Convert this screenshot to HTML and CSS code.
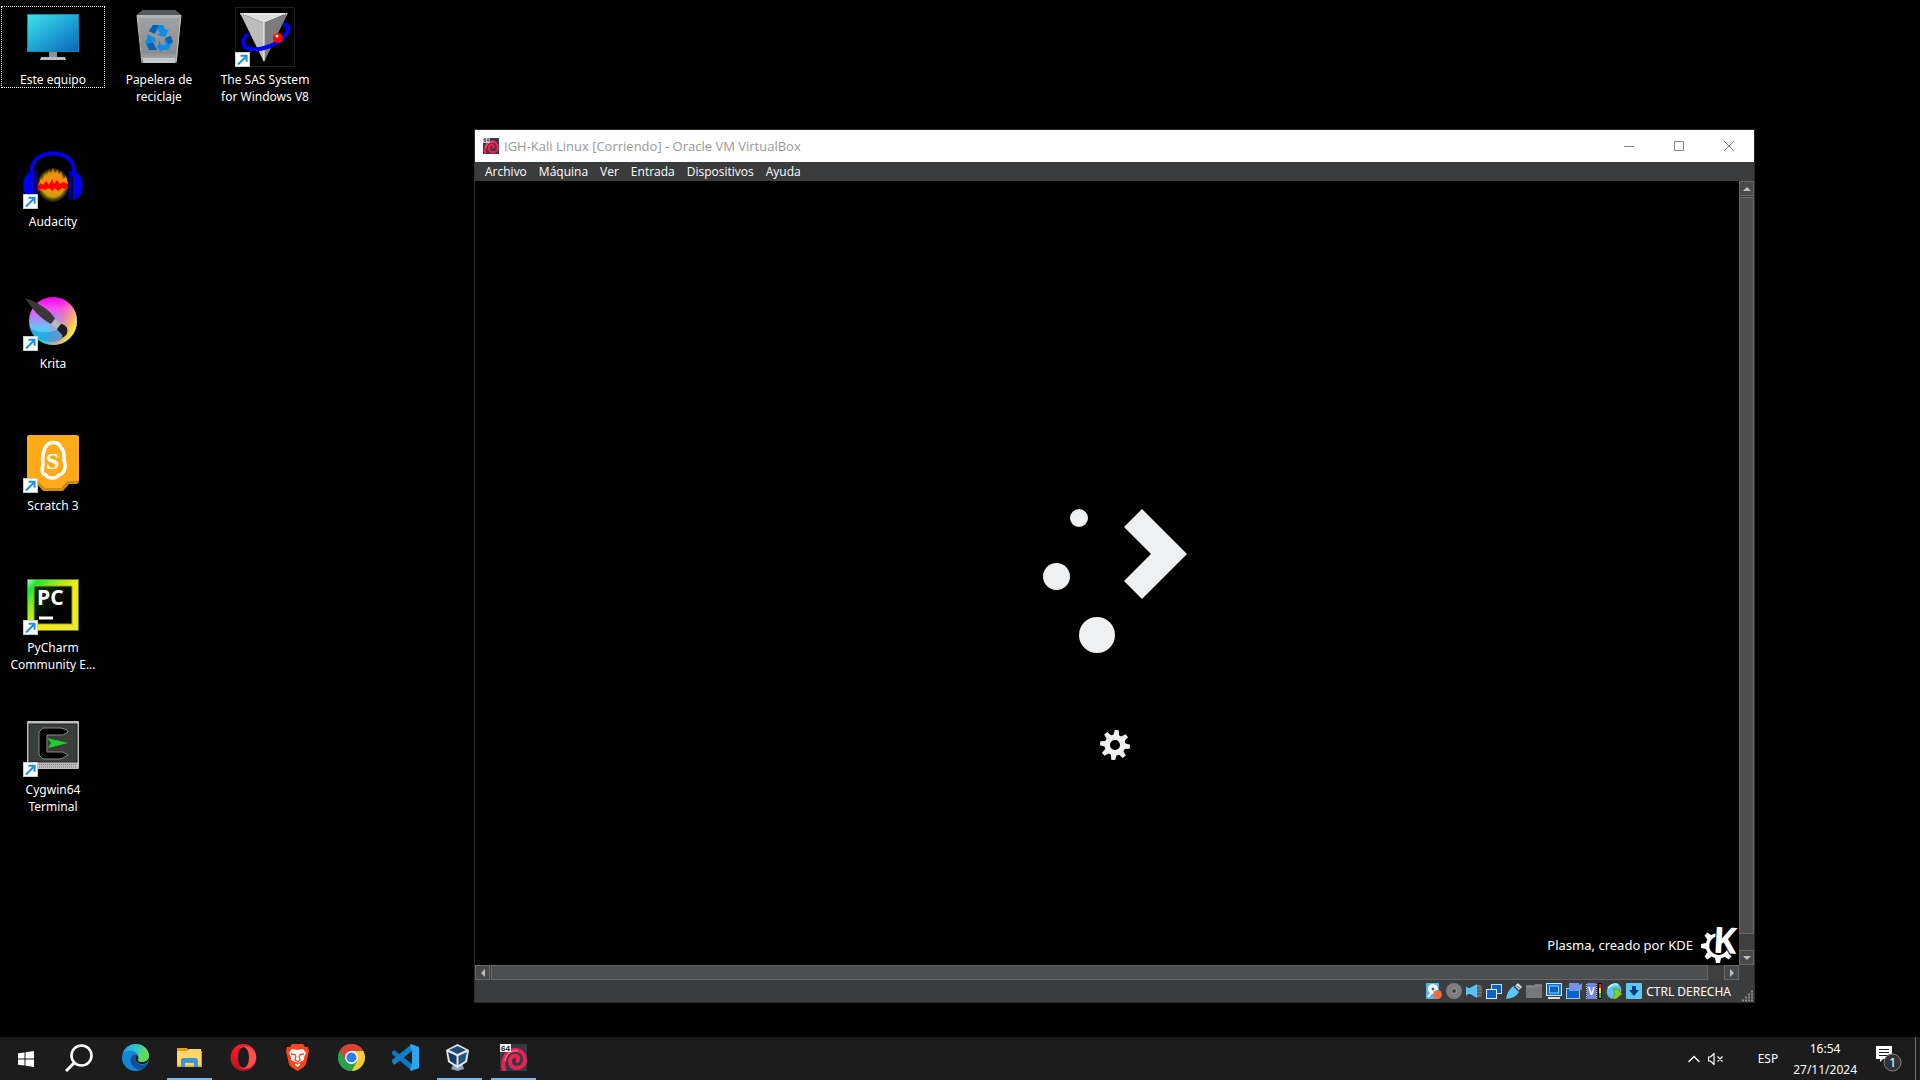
FILE: index.html
```html
<!DOCTYPE html>
<html lang="es">
<head>
<meta charset="utf-8">
<title>Escritorio</title>
<link rel="stylesheet" href="styles.css">
</head>
<body>
<svg width="0" height="0" class="defs" aria-hidden="true">
  <defs>
    <linearGradient id="screen" x1="0" y1="0" x2="1" y2="1"><stop offset="0" stop-color="#3fe3ea"/><stop offset=".5" stop-color="#1fa5d6"/><stop offset="1" stop-color="#0768bb"/></linearGradient>
    <linearGradient id="bin" x1="0" y1="0" x2="0" y2="1"><stop offset="0" stop-color="#a4a6a8"/><stop offset=".8" stop-color="#8a8d90"/><stop offset="1" stop-color="#b4bac0"/></linearGradient>
    <radialGradient id="wave"><stop offset="0" stop-color="#ffa800"/><stop offset=".7" stop-color="#c8a010"/><stop offset="1" stop-color="#3a3000" stop-opacity=".4"/></radialGradient>
    <linearGradient id="krita1" x1="0" y1="0" x2="0" y2="1"><stop offset="0" stop-color="#ff00f0"/><stop offset=".25" stop-color="#f050f0"/><stop offset=".6" stop-color="#78b8f8"/><stop offset=".8" stop-color="#20e8f0"/><stop offset="1" stop-color="#00f0d0"/></linearGradient>
    <linearGradient id="krita2" x1=".5" y1=".4" x2="1" y2=".65"><stop offset="0" stop-color="#ff60b0" stop-opacity="0"/><stop offset=".6" stop-color="#ffa080" stop-opacity=".9"/><stop offset="1" stop-color="#f8ff20"/></linearGradient>
    <linearGradient id="pyframe" x1="0" y1="0" x2="1" y2="1"><stop offset="0" stop-color="#b8ffc0"/><stop offset=".12" stop-color="#18e838"/><stop offset=".3" stop-color="#90ec20"/><stop offset=".5" stop-color="#f2ea10"/><stop offset="1" stop-color="#ece63c"/></linearGradient>
    <linearGradient id="pyin" x1="0" y1="0" x2="1" y2="1"><stop offset="0" stop-color="#103c14"/><stop offset=".6" stop-color="#000"/></linearGradient>
    <linearGradient id="edge" x1="0" y1=".2" x2="1" y2=".5"><stop offset="0" stop-color="#22a6ec"/><stop offset=".5" stop-color="#30c8c8"/><stop offset="1" stop-color="#70e048"/></linearGradient>
    <linearGradient id="opera" x1="0" y1="0" x2="0" y2="1"><stop offset="0" stop-color="#ff1b2d"/><stop offset="1" stop-color="#b8101c"/></linearGradient>
    <symbol id="shortcut" viewBox="0 0 15 15"><rect x=".5" y=".5" width="14" height="14" fill="#fff" stroke="#c4ccd4"/><path d="M3 12.500 11 4.500M5.500 3.700H11.600V9.800" fill="none" stroke="#1e90e0" stroke-width="2"/></symbol>
    <symbol id="debian" viewBox="0 0 27 27"><rect width="27" height="27" fill="#343a44"/><path d="M4.500 27C1 17 6 6 15 6 22 6 25 11 25 16 25 21 21 24 17 24 13 24 10 21 10 17 10 13 13 11 16 12 19 13 19 17 16 17" fill="none" stroke="#f02050" stroke-width="4"/><path d="M5 17C6 10 12 5.500 18 7" fill="none" stroke="#ff7a94" stroke-width="1.200"/><rect width="11" height="8" fill="#eee"/><text x="1" y="7" class="bits">64</text></symbol>
  </defs>
</svg>

<main class="desktop">
  <div class="icons">
    <a href="#" class="icon focused"><svg viewBox="0 0 60 60"><rect x="4" y="7" width="52" height="38" fill="#1585b0"/><rect x="5" y="8" width="50" height="36" fill="url(#screen)"/><rect x="26" y="45" width="8" height="6" fill="#8a929c"/><path d="M18 50h24l1 3H17z" fill="#b4bcc4"/></svg><span>Este equipo</span></a>
    <a href="#" class="icon"><svg viewBox="0 0 60 60"><path d="M8 8 14 3H46L52 8 48 52 46 56H14L13 52z" fill="url(#bin)"/><path d="M8 8 14 3H46L52 8z" fill="#55585c"/><path d="M8 8H52L51 11H9z" fill="#b0b3b5"/><path d="M8 8 13 56M52 8 47 56" stroke="#c2c5c8"/><path d="M14 51H46V56H14z" fill="#c3c9cf"/><g fill="#0f8de4"><path d="M24 18H34L37 23 40 22 36 30 28 28 31 26 28 22 25 27 20 24z"/><path d="M18 27 26 31 27 36 24 34 22 39 25 43H20L16 35 18 32z"/><path d="M30 36V32L32 38H37L35 33 41 29 44 35 39 43H33V46L28 40z"/></g><path d="M24 18H30L26 27 20 24zM18 37 24 35 28 43H20zM36 31 42 29 44 35 39 37z" fill="#0462b4"/></svg><span>Papelera de reciclaje</span></a>
    <a href="#" class="icon"><svg viewBox="0 0 60 60"><rect x=".5" y=".5" width="59" height="59" fill="#000" stroke="#202020"/><path d="M5 6H53L29 16z" fill="#dcdcdc"/><path d="M5 6 29 16V55z" fill="#bcbcbc"/><path d="M53 6 29 16V55z" fill="#7c7c7c"/><path d="M29 15V54" stroke="#fff"/><path d="M5 7H53" stroke="#fff" stroke-dasharray="1 1"/><path d="M13 27C7 32 6 40 15 42 25 44 42 38 49 30 54 24 56 17 48 18" fill="none" stroke="#00f" stroke-width="4"/><circle cx="43" cy="31" r="5" fill="#f00"/><circle cx="42" cy="29" r="1.500" fill="#fff"/><use href="#shortcut" y="45" width="15" height="15"/></svg><span>The SAS System for Windows V8</span></a>
    <a href="#" class="icon col1"><svg viewBox="0 0 60 60"><path d="M9 27V21C9 11 18 4.500 30 4.500S51 11 51 21V27" fill="none" stroke="#00e" stroke-width="4"/><path d="M10 22V51C-3 49-3 24 10 22zM50 22V51C63 49 63 24 50 22z" fill="#00e"/><path d="M13 22V51M47 22V51" stroke="#0000a0" stroke-width="3"/><ellipse cx="30" cy="36" rx="16" ry="17" fill="url(#wave)"/><path d="M16 35 18 29 20 33 22 24 24 31 26 21 28 30 30 18 32 30 34 20 36 28 38 22 40 31 43 27 45 35V38L42 41 39 39 36 45 33 40 30 47 27 40 24 44 21 39 18 42 15 38z" fill="#ff8a10"/><path d="M15 37 18 34 20 36 23 32 26 36 29 30 31 35 34 31 37 35 40 33 45 35V38L42 40 39 39 35 42 32 39 29 42 26 39 22 41 19 40 15 42z" fill="#f00"/><use href="#shortcut" y="45" width="15" height="15"/></svg><span>Audacity</span></a>
    <a href="#" class="icon col1"><svg viewBox="0 0 60 60"><circle cx="30" cy="30" r="24" fill="url(#krita1)"/><circle cx="30" cy="30" r="24" fill="url(#krita2)"/><path d="M8 38C18 43 31 42 37 37L42 38C43 46 38 50 31 51 20 51 10 48 8 38z" fill="#2b8fe0" opacity=".65"/><path d="M2 7C12 10 28 19 32 28L28 33C18 28 8 17 2 7z" fill="#38383a"/><path d="M32 28 38 33 34 38 28 33z" fill="#b8b8b8"/><path d="M38 33C46 34 47 44 39 47 41 43 36 42 34 38z" fill="#1c2025"/><use href="#shortcut" y="45" width="15" height="15"/></svg><span>Krita</span></a>
    <a href="#" class="icon col1"><svg viewBox="0 0 60 60"><path d="M4 5Q4 2 7 2H53Q56 2 56 5V48Q56 51 53 51H46L40 58H20L14 51H4z" fill="#cf8b17"/><path d="M4 5Q4 2 7 2H53Q56 2 56 5V46Q56 48 53 48H44L38 55H22L15 48H4z" fill="#ffab19"/><path d="M26 10.500C31 8 37 10 38 15 42 18 41 23 41 27 44 34 41 41 36 42 32 47 24 45 23 42 18 41 19 35 20 31 19 25 20 14 26 10.500z" fill="#ffab19" stroke="#fff" stroke-width="3.500"/><text x="23" y="36" class="scratch-s">S</text><use href="#shortcut" y="45" width="15" height="15"/></svg><span>Scratch 3</span></a>
    <a href="#" class="icon col1"><svg viewBox="0 0 60 60"><rect x="4.500" y="4.500" width="51" height="51" fill="url(#pyframe)" stroke="#6a7a10"/><rect x="11" y="11" width="38" height="38" fill="url(#pyin)" stroke="#a0a810"/><text x="14" y="30" class="py">PC</text><path d="M16 43H30" stroke="#fff" stroke-width="3"/><use href="#shortcut" y="45" width="15" height="15"/></svg><span>PyCharm Community&nbsp;E...</span></a>
    <a href="#" class="icon col1"><svg viewBox="0 0 60 60"><rect x="4" y="4" width="52" height="48" rx="1" fill="#bebebe"/><rect x="6" y="7" width="48" height="38" fill="#3a3e3a" stroke="#222"/><path d="M44 13 38 11H20L16 15V38L20 42H38L45 38 40 35H24V18H40L45 15z" fill="#000" stroke="#888"/><path d="M24 21 45 26 25 31 28 26z" fill="#18d428"/><path d="M14 47.500H53M14 50H53" stroke="#777" stroke-dasharray="1 1"/><use href="#shortcut" y="45" width="15" height="15"/></svg><span>Cygwin64 Terminal</span></a>
  </div>

  <section class="window">
    <header class="titlebar">
      <svg class="app" viewBox="0 0 27 27"><use href="#debian"/></svg>
      <h1>IGH-Kali Linux [Corriendo] - Oracle VM VirtualBox</h1>
      <button aria-label="Minimizar"><svg viewBox="0 0 10 10"><path d="M0 5.500H10"/></svg></button>
      <button aria-label="Maximizar"><svg viewBox="0 0 10 10"><path d="M.5.500H9.500V9.500H.5z"/></svg></button>
      <button aria-label="Cerrar"><svg viewBox="0 0 10 10"><path d="M0 0 10 10M10 0 0 10"/></svg></button>
    </header>
    <nav class="menu">
      <button>Archivo</button><button>Máquina</button><button>Ver</button><button>Entrada</button><button>Dispositivos</button><button>Ayuda</button>
    </nav>
    <div class="view">
      <div class="guest">
        <svg class="plasma" viewBox="0 0 144 144" fill="#eff0f1"><circle cx="36" cy="9" r="9"/><circle cx="13.500" cy="67.500" r="13.500"/><circle cx="54" cy="126" r="18"/><path d="M99 0 144 45 99 90 81 72 108 45 81 18z"/></svg>
        <svg class="spinner" viewBox="-15 -15 30 30"><g fill="#eff0f1" transform="rotate(7)"><path id="tooth" d="M-3-9-2-15H2L3-9z"/><use href="#tooth" transform="rotate(45)"/><use href="#tooth" transform="rotate(90)"/><use href="#tooth" transform="rotate(135)"/><use href="#tooth" transform="rotate(180)"/><use href="#tooth" transform="rotate(225)"/><use href="#tooth" transform="rotate(270)"/><use href="#tooth" transform="rotate(315)"/></g><circle r="7.800" fill="none" stroke="#eff0f1" stroke-width="5.500"/></svg>
        <div class="credit"><span>Plasma, creado por KDE</span>
          <svg viewBox="0 0 36 36"><g transform="translate(17 19)"><g fill="#fff"><path id="kt" d="M-3 12-2 17H2L3 12z"/><use href="#kt" transform="rotate(45)"/><use href="#kt" transform="rotate(90)"/><use href="#kt" transform="rotate(135)"/><use href="#kt" transform="rotate(-45)"/></g><path d="M-2-11A11 11 0 1 0 11 3" fill="none" stroke="#fff" stroke-width="3.500"/></g><text x="12" y="26" class="kde" transform="rotate(3 20 13)">K</text></svg>
        </div>
      </div>
      <div class="bar vertical"><button aria-label="Subir"><svg viewBox="0 0 8 8"><path d="M0 6 4 2 8 6z"/></svg></button><div class="thumb"></div><button aria-label="Bajar"><svg viewBox="0 0 8 8"><path d="M0 2 4 6 8 2z"/></svg></button></div>
      <div class="bar horizontal"><button aria-label="Izquierda"><svg viewBox="0 0 8 8"><path d="M6 0 2 4 6 8z"/></svg></button><div class="thumb"></div><button aria-label="Derecha"><svg viewBox="0 0 8 8"><path d="M2 0 6 4 2 8z"/></svg></button></div>
    </div>
    <footer class="status">
      <svg viewBox="0 0 16 16"><rect width="13" height="16" rx="1" fill="#58b4f0"/><circle cx="7" cy="6" r="5" fill="#fff"/><circle cx="7" cy="6" r="1.500" fill="#1873c8"/><path d="M2 14 6 9" stroke="#fff" stroke-width="2"/><circle cx="11.500" cy="11.500" r="4.500" fill="#f46a3c"/></svg>
      <svg viewBox="0 0 16 16"><circle cx="8" cy="8" r="8" fill="#7c7d7e"/><circle cx="8" cy="8" r="2.500" fill="#444" stroke="#a0a0a0"/></svg>
      <svg viewBox="0 0 16 16"><rect x="9" y="2" width="7" height="12" rx="3" fill="#777"/><path d="M10 5h6M10 8h6M10 11h6" stroke="#444"/><path d="M0 3 2 5H4L11 1V15L4 11H2L0 13z" fill="#5bc1f2"/></svg>
      <svg viewBox="0 0 16 16"><rect x="5.500" y="1.500" width="10" height="9" fill="#0d62c8" stroke="#b9defa"/><rect x=".5" y="6.500" width="10" height="9" fill="#0d62c8" stroke="#d8effc"/></svg>
      <svg viewBox="0 0 16 16"><path d="M0 16C1 10 3 7 7 3L13 9C10 14 6 15 0 16z" fill="#5cc6fa"/><path d="M9 3 12 0 16 4 13 7z" fill="#ddd"/><path d="M11 3 14 5" stroke="#555"/></svg>
      <svg viewBox="0 0 16 16"><path d="M0 2H8L9 1H16V15H0z" fill="#777879"/><path d="M0 4H9L10 3H16" stroke="#8e8e8e" fill="none"/></svg>
      <svg viewBox="0 0 16 16"><rect x=".5" y=".5" width="15" height="12" fill="#1370d4" stroke="#c8e8fb"/><rect x="3.500" y="3" width="9" height="7" fill="#1060c4" stroke="#8cd0fa"/><path d="M2 15H14" stroke="#ddd" stroke-width="2"/></svg>
      <svg viewBox="0 0 16 16"><rect x=".5" y="5.500" width="13" height="10" fill="#0d62c8" stroke="#8ecff8"/><path d="M3 0H13V2L16 0V7L13 6V8H3z" fill="#7494e8"/></svg>
      <svg viewBox="0 0 16 16"><rect x="1" width="9" height="16" rx="1" fill="#7387dc"/><path d="M.5 1V16M10.500 1V16" stroke="#a8b6f8" stroke-dasharray="1 1"/><text x="2" y="12" class="cpu">V</text><rect x="12" width="4" height="16" fill="#000"/><path d="M14 1V5" stroke="#f22" stroke-width="2"/><path d="M14 5V10" stroke="#fd0" stroke-width="2"/><path d="M14 10V15" stroke="#3c2" stroke-width="2"/></svg>
      <svg viewBox="0 0 16 16"><ellipse cx="8" cy="8" rx="7" ry="8" fill="#5cc3ec" transform="rotate(30 8 8)"/><path d="M2 5C7 0 11 1 12 2" stroke="#b4ecff" stroke-width="2" fill="none"/><path d="M7 6H12L16 11 10 16H6L9 11z" fill="#86cf2c" stroke="#3d7d10" stroke-width=".6"/></svg>
      <svg viewBox="0 0 16 16"><rect width="16" height="16" rx="1" fill="#5cc8f4"/><path d="M6 3H10V7H13L8 13 3 7H6z" fill="#0a3a80"/></svg>
      <span>CTRL DERECHA</span>
      <svg class="grip" viewBox="0 0 12 12"><path d="M9 1.500h2M6 4.500h5M3 7.500h8M0 10.500h11" stroke="#8a8a8a" stroke-width="2" stroke-dasharray="2 1"/></svg>
    </footer>
  </section>
</main>

<footer class="taskbar">
  <button class="start" aria-label="Inicio"><svg viewBox="0 0 16 16" fill="#fff"><path d="M0 2.300 6.500 1.400V7.500H0zM7.500 1.200 16 0V7.500H7.500zM0 8.500H6.500V14.600L0 13.700zM7.500 8.500H16V16L7.500 14.800z"/></svg></button>
  <button class="task search" aria-label="Buscar"><svg viewBox="0 0 28 28" fill="none" stroke="#fff"><circle cx="16.500" cy="11.500" r="10" stroke-width="2.600"/><path d="M9 19 1 27" stroke-width="3"/></svg></button>
  <button class="task" aria-label="Edge"><svg viewBox="0 0 27 27"><circle cx="13.500" cy="13.500" r="13.500" fill="#1485d8"/><path d="M1 9C4 2 9 0 14 0 22 0 27 6 27 12 27 17 22 19 17 17.500 15 16 18 14 16 10.500 12 5 4 6 1 9z" fill="url(#edge)"/><path d="M9 14C7 22 15 27 20 25 23 24 25 21 26 19 21 23 15 20 14 17 13 14 14 12 15 11 12 10 10 11 9 14z" fill="#134f98"/><path d="M15 11C12 14 14 20 20 20 24 20 26 18 27 15V12C26 18 20 18 17 17.500 15 16 18 14 15 11z" fill="#1c1c1c"/><path d="M27 12C27 17 22 19 17 17.500 15 16 18 14 16 10.500 20 8 24 10 27 12z" fill="#62d858"/></svg></button>
  <button class="task open" aria-label="Explorador de archivos"><svg viewBox="0 0 27 27"><path d="M1 4H11L13 7H26V23H1z" fill="#e6a012"/><path d="M1 7H11L13 5H25V23H1z" fill="#ffd768"/><path d="M1 21H25V23H1z" fill="#e9b532"/><path d="M5 23V15L7 14H20L22 16V23H18V19H9V23z" fill="#3b97dd"/></svg></button>
  <button class="task" aria-label="Opera"><svg viewBox="0 0 27 27"><ellipse cx="13.500" cy="13.500" rx="13" ry="13.500" fill="url(#opera)"/><path d="M9 4C17-1 26 5 26 13.500S17 28 9 23C22 26 22 1 9 4z" fill="#fa5050"/><ellipse cx="13.500" cy="13.500" rx="5.500" ry="10.500" fill="#1c1c1c"/></svg></button>
  <button class="task" aria-label="Brave"><svg viewBox="0 0 27 27"><path d="M8 0H19L21 3 24 3 25 7 22 20Q21 23 13.500 27 6 23 5 20L2 7 3 3H6z" fill="#fa4420"/><path d="M8 5 13.500 6 19 5 22 9 20 13 20 16 16 18 16 21 13.500 23 11 21 11 18 7 16 7 13 5 9z" fill="#fff"/><path d="M7 10 12 11M20 10 15 11M12 12 11 16 13.500 18 16 16 15 12M10 18 13.500 20 17 18" fill="none" stroke="#fa4420" stroke-width="1.300"/></svg></button>
  <button class="task" aria-label="Chrome"><svg viewBox="0 0 27 27"><circle cx="13.500" cy="13.500" r="13.500" fill="#2aa14c"/><path d="M13.500 13.500 1.800 6.700A13.500 13.500 0 0 1 25.200 6.700H13.500z" fill="#dc4335"/><path d="M13.500 7H25.300A13.500 13.500 0 0 1 13.500 27L19.500 16.500z" fill="#fcc934"/><path d="M1.800 6.700 8 17 13.500 7z" fill="#dc4335"/><path d="M1.800 6.700 7.800 17 13.500 20 19.500 16.500 13.500 27A13.500 13.500 0 0 1 1.800 6.700z" fill="#2aa14c"/><circle cx="13.500" cy="13.500" r="6.500" fill="#fff"/><circle cx="13.500" cy="13.500" r="5" fill="#2f7de9"/></svg></button>
  <button class="task" aria-label="Visual Studio Code"><svg viewBox="0 0 27 27"><path d="M0 8 2 6 20 20V27L0 10z" fill="#0a78c4"/><path d="M0 18 2 21 20 7V0L0 16z" fill="#1180cc"/><path d="M19 0 27 3V24L19 27 18 26 20 20V7L18 1z" fill="#2aa5ee"/></svg></button>
  <button class="task open" aria-label="VirtualBox"><svg viewBox="0 0 27 27"><path d="M8 19H16L18 25 11.500 27 5 25z" fill="#8fa5be"/><path d="M11.500 0 23 6 21 18 11.500 24 2 18 0 6z" fill="#dfe8f0"/><path d="M11.500 2 20 6 11.500 10 3 6z" fill="#234870"/><path d="M2 8 10.500 12V21L4 17z" fill="#173860"/><path d="M21 8 12.500 12V21L19 17z" fill="#28507c"/></svg></button>
  <button class="task open" aria-label="IGH-Kali Linux"><svg viewBox="0 0 27 27"><use href="#debian"/></svg></button>
  <div class="tray">
    <svg class="chev" viewBox="0 0 12 8"><path d="M.5 7 6 1.500 11.500 7" fill="none" stroke="#fff" stroke-width="1.300"/></svg>
    <svg class="vol" viewBox="0 0 16 12" fill="none" stroke="#fff"><path d="M.5 4V8H2.500L6 11.500V.5L2.500 4zM9.500 3.500 14.500 8.500M14.500 3.500 9.500 8.500" stroke-width="1.200"/></svg>
    <span class="lang">ESP</span>
    <time class="clock" datetime="2024-11-27T16:54">16:54<br>27/11/2024</time>
    <button class="notes" aria-label="Notificaciones"><svg viewBox="0 0 26 26"><path d="M0 0H16V13H7L4 16V13H0z" fill="#fff"/><path d="M3 3.500H13M3 6.500H13M3 9.500H13" stroke="#1c1c1c"/><circle cx="16.500" cy="16.500" r="8.500" fill="#333" stroke="#858585"/><text x="13" y="21" class="count">1</text></svg></button>
    <button class="show" aria-label="Mostrar escritorio"></button>
  </div>
</footer>
</body>
</html>
```

FILE: styles.css
```css
* { box-sizing: border-box; }

body {
  margin: 0;
  min-height: 100vh;
  display: flex;
  flex-direction: column;
  background: #000;
  color: #fff;
  font: 12px/17px "Noto Sans", "Open Sans", sans-serif;
}

button {
  margin: 0;
  padding: 0;
  border: 0;
  background: none;
  color: inherit;
  font: inherit;
}

svg { display: block; flex: none; }
.defs { position: absolute; }

.desktop {
  position: relative;
  flex: 1;
}

/* desktop icons */
.icons {
  display: grid;
  grid-template-columns: repeat(3, 104px);
  grid-auto-rows: 142px;
  column-gap: 2px;
  align-items: start;
  padding: 6px 1px 0;
}
.icon {
  display: flex;
  flex-direction: column;
  align-items: center;
  gap: 4px;
  padding: 1px 4px 0;
  color: #fff;
  text-align: center;
  text-decoration: none;
}
.icon svg { width: 60px; height: 60px; }
.col1 { grid-column: 1; }
.focused { outline: 1px dotted #fff; outline-offset: -1px; }
.py { font: bold 21px "Open Sans", sans-serif; fill: #fff; }
.scratch-s { font: bold 24px "Liberation Serif", serif; fill: #fff; }
.bits { font: bold 8px "Liberation Sans", sans-serif; fill: #222; }

/* virtual machine window */
.window {
  position: absolute;
  left: 474px;
  top: 129px;
  width: 1281px;
  height: 874px;
  display: flex;
  flex-direction: column;
  border: 1px solid #2c2c2c;
  background: #3b3c3e;
}
.titlebar {
  display: flex;
  align-items: center;
  height: 32px;
  padding-left: 8px;
  background: #fff;
  color: #999;
}
.app { width: 16px; height: 16px; margin-right: 5px; }
.titlebar h1 {
  flex: 1;
  margin: 0;
  font: 13px/17px "Open Sans", sans-serif;
}
.titlebar button {
  display: flex;
  justify-content: center;
  width: 50px;
}
.titlebar button svg { width: 10px; height: 10px; fill: none; stroke: #888; }
.menu {
  display: flex;
  gap: 12px;
  height: 19px;
  padding-left: 10px;
  font-family: "Open Sans", sans-serif;
}
.view {
  flex: 1;
  min-height: 0;
  display: grid;
  grid-template-columns: minmax(0, 1fr) 15px;
  grid-template-rows: minmax(0, 1fr) 15px;
}
.guest {
  display: flex;
  flex-direction: column;
  align-items: center;
  padding: 328px 0 2px 16px;
  background: #000;
}
.plasma { width: 144px; height: 144px; }
.spinner { width: 30px; height: 30px; margin-top: 77px; }
.credit {
  display: flex;
  align-items: center;
  align-self: flex-end;
  gap: 8px;
  margin-top: auto;
  padding-right: 2px;
  font-size: 13px;
}
.credit svg { width: 36px; height: 36px; overflow: visible; }
.kde { font: bold 36px "Open Sans", sans-serif; fill: #fff; stroke: #000; stroke-width: 2px; paint-order: stroke; }
.bar { display: flex; gap: 1px; background: #3f3f40; }
.vertical { flex-direction: column; }
.bar button, .thumb { border: 1px solid #67686a; background: #48494b; }
.bar button {
  display: flex;
  align-items: center;
  justify-content: center;
  width: 15px;
  height: 15px;
}
.bar svg { width: 8px; height: 8px; fill: #c0c0c0; }
.thumb { flex: 1; background: #4d4e50; }
.vertical .thumb { margin-bottom: 15px; }
.horizontal .thumb { margin-right: 15px; }
.status {
  display: flex;
  align-items: center;
  justify-content: flex-end;
  gap: 4px;
  height: 22px;
}
.status svg { width: 16px; height: 16px; }
.status .grip { width: 12px; height: 12px; margin-left: 7px; align-self: flex-end; }
.cpu { font: bold 10px "Liberation Sans", sans-serif; fill: #fff; }

/* taskbar */
.taskbar {
  display: flex;
  height: 43px;
  padding-left: 4px;
  background: #1c1c1c;
}
.taskbar button {
  display: flex;
  align-items: center;
  justify-content: center;
}
.start { width: 44px; }
.start svg { width: 16px; height: 16px; }
.task {
  width: 45px;
  margin-right: 9px;
  border-bottom: 2px solid transparent;
}
.task svg { width: 27px; height: 27px; }
.search { margin: 0 11px 0 8px; width: 46px; }
.search svg { width: 28px; height: 28px; }
.open { border-color: #76b9ed; }
.tray {
  display: flex;
  align-items: center;
  margin-left: auto;
}
.chev { width: 12px; height: 8px; margin-right: 8px; }
.vol { width: 16px; height: 12px; }
.lang { margin-left: 34px; }
.clock { margin-left: 15px; line-height: 21px; text-align: center; }
.notes { margin-left: 19px; }
.notes svg { width: 26px; height: 26px; }
.taskbar .show {
  align-self: stretch;
  width: 5px;
  margin-left: 13px;
  border-left: 1px solid #707070;
}
.count { font: 13px "Noto Sans", sans-serif; fill: #fff; }
```
